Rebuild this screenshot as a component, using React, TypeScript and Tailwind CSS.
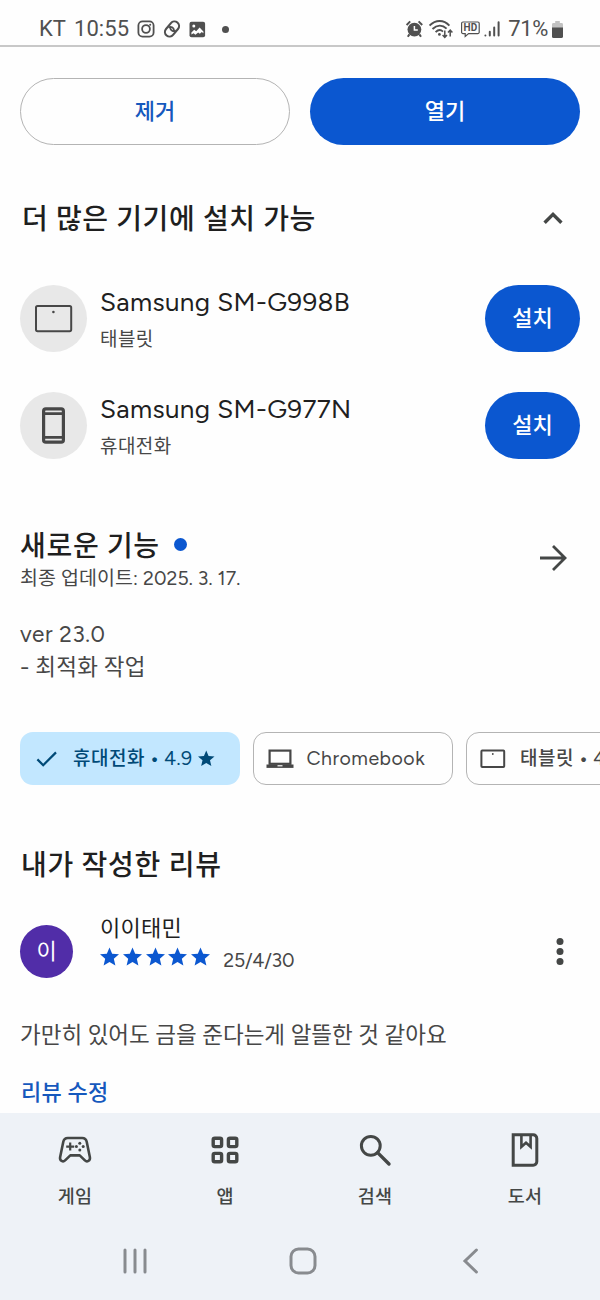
import React from 'react';

const StatusBar: React.FC = () => (
  <div className="flex items-center justify-between h-[47px] pt-[13px] pl-[39px] pr-[36px] border-b-2 border-[#c8c8c8] text-[#505050] font-['Roboto',sans-serif] shrink-0">
    <div className="flex items-center">
      <span className="flex gap-[8px] text-[22px] leading-none w-[98px] whitespace-nowrap">
        <span>KT</span>
        <span className="tracking-[0.1px]">10:55</span>
      </span>
      <svg width="18" height="18" viewBox="0 0 18 18" fill="none" stroke="currentColor" strokeWidth="1.8">
        <rect x="1.4" y="1.4" width="15.2" height="15.2" rx="4.2" />
        <circle cx="9" cy="9" r="3.9" />
        <circle cx="13.2" cy="4.8" r="1" fill="currentColor" stroke="none" />
      </svg>
      <svg className="ml-2" width="18" height="18" viewBox="0 0 18 18" fill="none" stroke="currentColor" strokeWidth="2.1">
        <rect x="-8.4" y="-4.6" width="16.8" height="9.2" rx="4.6" transform="translate(9 9) rotate(-50)" />
        <path d="M5.4 7.4c2.6-1.4 5.4.2 5.6 3M12.8 10.6c-2.6 1.4-5.4-.2-5.6-3" strokeWidth="1.8" />
      </svg>
      <svg className="ml-[8px]" width="17" height="17" viewBox="0 0 17 17">
        <rect x="0.5" y="0.8" width="15.6" height="15.4" rx="2" fill="currentColor" />
        <path d="M2.4 11.4l2.8-2.6 2 1.4 3.4-3.6 3.8 4v1.6l-1.6-1.2-2 1.8-1.6-1.2-2.8 2.2-1.8-1.6-2.2 1.2z" fill="#fff" />
        <circle cx="4.8" cy="5" r="1.5" fill="#fff" />
      </svg>
      <span className="ml-[16px] w-[7px] h-[7px] rounded-full bg-[#505050]" />
    </div>
    <div className="flex items-center">
      <svg width="18" height="18" viewBox="0 0 18 18" fill="currentColor">
        <circle cx="8.4" cy="9.6" r="6.9" />
        <path d="M0.6 5L4.2 1.4M16.2 5L12.6 1.4M3.4 14.4L1.8 16.8M13.4 14.4L15 16.8" stroke="currentColor" strokeWidth="2" />
        <path d="M8.4 6v3.9h3.4" fill="none" stroke="#fff" strokeWidth="1.5" />
      </svg>
      <svg className="ml-[5px]" width="26" height="20" viewBox="0 0 26 20" fill="none" stroke="currentColor" strokeWidth="1.9">
        <path d="M0.5 6.6C6.5 0.4 14.8 0.4 20.4 6.6M3.5 10C8 5.6 13.4 5.6 17.6 9.6M6.6 13.2c2.6-2.6 5.2-2.6 7.4-.6" />
        <circle cx="10.4" cy="15.4" r="1.4" fill="currentColor" stroke="none" />
        <path d="M15.8 11.4v6.8M13.6 16l2.2 2.4 2.2-2.4M21.2 17.4v-6.2M19 13.4l2.2-2.4 2.2 2.4" strokeWidth="1.5" />
      </svg>
      <svg className="ml-[6px]" width="20" height="18" viewBox="0 0 20 18" fill="none" stroke="currentColor">
        <path d="M2 2h14.8a1.4 1.4 0 0 1 1.4 1.4v8.8a1.4 1.4 0 0 1-1.4 1.4H7.6L4.2 16.4v-2.8H2a1.4 1.4 0 0 1-1.4-1.4V3.4A1.4 1.4 0 0 1 2 2z" strokeWidth="1.2" />
        <text x="9.4" y="11.4" textAnchor="middle" fontSize="10" fontWeight="700" fill="currentColor" stroke="none">HD</text>
      </svg>
      <svg className="ml-[3px]" width="18" height="18" viewBox="0 0 18 18" fill="none" stroke="currentColor" strokeWidth="2" strokeLinecap="round">
        <path d="M1.4 15.4v.2M5.8 11.8v3.8M10.2 7.4v8.2M14.6 2.2v13.4" />
      </svg>
      <span className="ml-[6px] text-[22px] leading-none tracking-[-0.4px]">71%</span>
      <svg className="ml-[4px]" width="12" height="19" viewBox="0 0 12 19">
        <path d="M3.2 1h4.6v2h1.8a1.4 1.4 0 0 1 1.4 1.4V9H0V4.4A1.4 1.4 0 0 1 1.4 3h1.8z" fill="#c2c2c2" />
        <path d="M0 7.6h11v8.8a1.6 1.6 0 0 1-1.6 1.6H1.6A1.6 1.6 0 0 1 0 16.4z" fill="currentColor" />
      </svg>
    </div>
  </div>
);

const TabletIcon: React.FC = () => (
  <svg width="38" height="28" viewBox="0 0 38 28" fill="none" stroke="#474747" strokeWidth="2">
    <rect x="1" y="1" width="35.2" height="25.2" rx="1.6" />
    <circle cx="18.4" cy="7" r="1.3" fill="#474747" stroke="none" />
  </svg>
);

const PhoneIcon: React.FC = () => (
  <svg width="24" height="38" viewBox="0 0 24 38" fill="none" stroke="#474747" strokeWidth="3.2">
    <rect x="1.6" y="1.8" width="19.8" height="33.4" rx="2.2" />
    <path d="M2 6.6h19.4M2 30.4h19.4" strokeWidth="2.6" />
  </svg>
);

const Star: React.FC<{ size: number }> = ({ size }) => (
  <svg width={size} height={size} viewBox="2 2 20 19" fill="currentColor">
    <path d="M12 17.27L18.18 21l-1.64-7.03L22 9.24l-7.19-.61L12 2 9.19 8.63 2 9.24l5.46 4.73L5.82 21z" />
  </svg>
);

const devices = [
  { name: 'Samsung SM-G998B', type: '태블릿', icon: TabletIcon },
  { name: 'Samsung SM-G977N', type: '휴대전화', icon: PhoneIcon }
];

const navItems = [
  {
    label: '게임',
    icon: (
      <svg width="34" height="34" viewBox="0 0 34 34" fill="none" stroke="#444746" strokeWidth="2.6" strokeLinejoin="round">
        <path d="M9.8 5h14.4c2.6 0 4 1.4 4.5 3.8l3.2 15.4c.6 3.8-3 5.2-5 3.2l-5.2-5h-9.4l-5.2 5c-2 2-5.6.6-5-3.2L5.3 8.8C5.8 6.4 7.2 5 9.8 5z" />
        <path d="M12.2 9.6v8M8.2 13.6h8" strokeWidth="2.2" />
        <g fill="#444746" stroke="none">
          <circle cx="21.8" cy="10.2" r="1.5" />
          <circle cx="21.8" cy="17" r="1.5" />
          <circle cx="18.4" cy="13.6" r="1.5" />
          <circle cx="25.2" cy="13.6" r="1.5" />
        </g>
      </svg>
    )
  },
  {
    label: '앱',
    icon: (
      <svg width="34" height="34" viewBox="0 0 34 34" fill="none" stroke="#444746" strokeWidth="3.4">
        <rect x="5.2" y="5.2" width="8.4" height="8.4" rx="1.6" />
        <rect x="20.4" y="5.2" width="8.4" height="8.4" rx="1.6" />
        <rect x="5.2" y="20.4" width="8.4" height="8.4" rx="1.6" />
        <rect x="20.4" y="20.4" width="8.4" height="8.4" rx="1.6" />
      </svg>
    )
  },
  {
    label: '검색',
    icon: (
      <svg width="34" height="34" viewBox="0 0 34 34" fill="none" stroke="#444746" strokeWidth="3">
        <circle cx="12.8" cy="12.8" r="9.4" />
        <path d="M19.6 19.6l11.4 11.4" strokeWidth="3.4" strokeLinecap="round" />
      </svg>
    )
  },
  {
    label: '도서',
    icon: (
      <svg width="34" height="34" viewBox="0 0 34 34" fill="none" stroke="#444746" strokeWidth="3">
        <path d="M5.2 1.8h20a3.6 3.6 0 0 1 3.6 3.6v23.2a3.6 3.6 0 0 1-3.6 3.6h-20z" />
        <path d="M13.4 2v11.8l4.6-4 4.6 4V2" strokeWidth="2.6" />
      </svg>
    )
  }
];

const App: React.FC = () => {
  return (
    <div className="w-[600px] h-[1300px] overflow-hidden flex flex-col bg-[#fefefe] text-[#1f1f1f] font-['Figtree','Inter','Noto_Sans_CJK_KR',sans-serif]">
      <StatusBar />

      {/* Uninstall / Open */}
      <div className="flex gap-5 px-5 mt-[31px] shrink-0">
        <button className="w-[270px] h-[67px] rounded-full border border-[#b4b4b4] text-[22px] font-medium text-[#1558bd]">제거</button>
        <button className="w-[270px] h-[67px] rounded-full bg-[#0b57d0] text-[22px] font-medium text-white">열기</button>
      </div>

      {/* Other devices */}
      <div className="flex items-center justify-between pl-[22px] pr-[37px] mt-[53px] h-10 shrink-0">
        <h2 className="pt-0.5 text-[28px] tracking-[0.65px] leading-10 font-medium">더 많은 기기에 설치 가능</h2>
        <svg width="20" height="14" viewBox="0 0 20 14" fill="none" stroke="#444746" strokeWidth="3.4">
          <path d="M1.6 11.8L10 3.4l8.4 8.4" />
        </svg>
      </div>
      <div className="flex flex-col gap-10 px-5 mt-[47px] shrink-0">
        {devices.map((device) => (
          <div key={device.name} className="flex items-center h-[67px]">
            <div className="flex items-center justify-center w-[67px] h-[67px] rounded-full bg-[#e8e8e8]">
              <device.icon />
            </div>
            <div className="flex-1 ml-[13px] pt-[5px]">
              <div className="text-[26px] leading-[35px] tracking-[0.38px]">{device.name}</div>
              <div className="pt-[3px] text-[19px] tracking-[0.4px] leading-[34px] text-[#474747]">{device.type}</div>
            </div>
            <button className="w-[95px] h-[67px] rounded-full bg-[#0b57d0] text-[22px] font-medium text-white">설치</button>
          </div>
        ))}
      </div>

      {/* What's new */}
      <div className="flex items-center justify-between pl-5 pr-[33px] mt-[65px] shrink-0">
        <div>
          <div className="flex items-center">
            <h2 className="pt-0.5 -mb-[2px] text-[28px] tracking-[0.7px] leading-10 font-medium">새로운 기능</h2>
            <span className="ml-[14px] w-[13px] h-[13px] rounded-full bg-[#0b57d0]" />
          </div>
          <div className="pt-px text-[19.5px] tracking-[0.08px] leading-[26px] text-[#474747]">최종 업데이트: 2025. 3. 17.</div>
        </div>
        <svg width="28" height="28" viewBox="0 0 28 28" fill="none" stroke="#444746" strokeWidth="2.8">
          <path d="M1 14h24M14 2l12 12-12 12" />
        </svg>
      </div>
      <div className="pl-5 mt-[27px] text-[22.5px] leading-[33px] text-[#474747] shrink-0">
        <p className="tracking-[0.6px]">ver 23.0</p>
        <p className="tracking-[0.2px]">- 최적화 작업</p>
      </div>

      {/* Form factor filters */}
      <div className="flex gap-[13px] pl-5 mt-[48px] text-[19.5px] text-[#474747] whitespace-nowrap shrink-0">
        <div className="flex items-center w-[220px] h-[53px] pl-4 rounded-[13px] bg-[#c2e7ff] text-[#004a77] shrink-0">
          <svg width="22" height="16" viewBox="0 0 22 16" fill="none" stroke="currentColor" strokeWidth="2.2">
            <path d="M1.4 8.4l5.8 5.8L20 1.4" />
          </svg>
          <span className="ml-[15px] pt-px text-[19px] tracking-[0.5px] font-medium">휴대전화</span>
          <span className="mx-[5px] font-bold">•</span>
          <span className="mr-[6px] tracking-[0.4px]">4.9</span>
          <Star size={16.5} />
        </div>
        <div className="flex items-center w-[200px] h-[53px] pl-[12px] rounded-[13px] border border-[#b4b4b4] shrink-0">
          <svg width="28" height="20" viewBox="0 0 28 20" fill="none" stroke="currentColor">
            <rect x="3.6" y="1.6" width="20.8" height="13.2" strokeWidth="2.2" />
            <path d="M0.5 17.2h27" strokeWidth="3.4" />
            <path d="M11.5 16.8h5" stroke="#fff" strokeWidth="1.2" />
          </svg>
          <span className="ml-[12.5px] tracking-[0.5px]">Chromebook</span>
        </div>
        <div className="flex items-center w-[220px] h-[53px] pl-[13px] rounded-[13px] border border-[#b4b4b4] shrink-0">
          <svg width="26" height="20" viewBox="0 0 26 20" fill="none" stroke="currentColor" strokeWidth="2">
            <rect x="1.4" y="1.6" width="22.8" height="16.4" rx="0.8" />
            <circle cx="12.8" cy="5" r="0.9" fill="currentColor" stroke="none" />
          </svg>
          <span className="ml-[14px] pt-px text-[19px] tracking-[0.5px] font-medium">태블릿</span>
          <span className="mx-[5px] font-bold">•</span>
          <span>4.7</span>
        </div>
      </div>

      {/* My review */}
      <h2 className="pl-[21px] mt-[60px] text-[28px] tracking-[0.75px] leading-10 font-medium shrink-0">내가 작성한 리뷰</h2>
      <div className="flex items-center pl-5 pr-[36px] mt-[27px] h-[78px] shrink-0">
        <div className="flex items-center justify-center w-[53px] h-[53px] rounded-full bg-[#512da8] text-white text-[22px]">이</div>
        <div className="flex-1 ml-[27px] pb-[15px]">
          <div className="text-[22px] tracking-[0.3px] leading-[30px]">이이태민</div>
          <div className="flex items-center h-[30px]">
            <div className="flex gap-[3.8px] -mt-1 text-[#0b57d0]">
              {[1, 2, 3, 4, 5].map((n) => (
                <Star key={n} size={19} />
              ))}
            </div>
            <span className="ml-[13px] mt-[4px] text-[19.5px] tracking-[-0.2px] text-[#474747]">25/4/30</span>
          </div>
        </div>
        <svg width="8" height="30" viewBox="0 0 8 30" fill="#444746">
          <circle cx="4" cy="5.4" r="3.5" />
          <circle cx="4" cy="15.4" r="3.5" />
          <circle cx="4" cy="25.4" r="3.5" />
        </svg>
      </div>
      <p className="pl-5 mt-[29px] text-[22.5px] leading-[33px] text-[#474747] shrink-0">가만히 있어도 금을 준다는게 알뜰한 것 같아요</p>
      <a className="pl-[21px] mt-[24px] text-[22px] tracking-[0.2px] leading-[33px] font-medium text-[#1558bd] shrink-0">리뷰 수정</a>

      {/* Bottom navigation */}
      <div className="mt-auto h-[187px] bg-[#eef2f7] shrink-0">
        <div className="grid grid-cols-4 pt-5">
          {navItems.map((item) => (
            <div key={item.label} className="flex flex-col items-center">
              {item.icon}
              <span className="mt-[16px] text-[18.5px] tracking-[0.2px] leading-7 font-medium text-[#444746]">{item.label}</span>
            </div>
          ))}
        </div>
        <div className="flex items-center justify-between pl-[121px] pr-[115px] mt-[36px]">
          <svg width="28" height="28" viewBox="0 0 28 28" stroke="#888b8f" strokeWidth="3" strokeLinecap="round">
            <path d="M4 3v22M14 3v22M24 3v22" />
          </svg>
          <svg width="28" height="28" viewBox="0 0 28 28" fill="none" stroke="#888b8f" strokeWidth="3">
            <rect x="2" y="2" width="24" height="24" rx="7.5" />
          </svg>
          <svg width="28" height="28" viewBox="0 0 28 28" fill="none" stroke="#888b8f" strokeWidth="3" strokeLinecap="round">
            <path d="M19.4 3L8 14 19.4 25" />
          </svg>
        </div>
      </div>
    </div>
  );
};

export default App;
